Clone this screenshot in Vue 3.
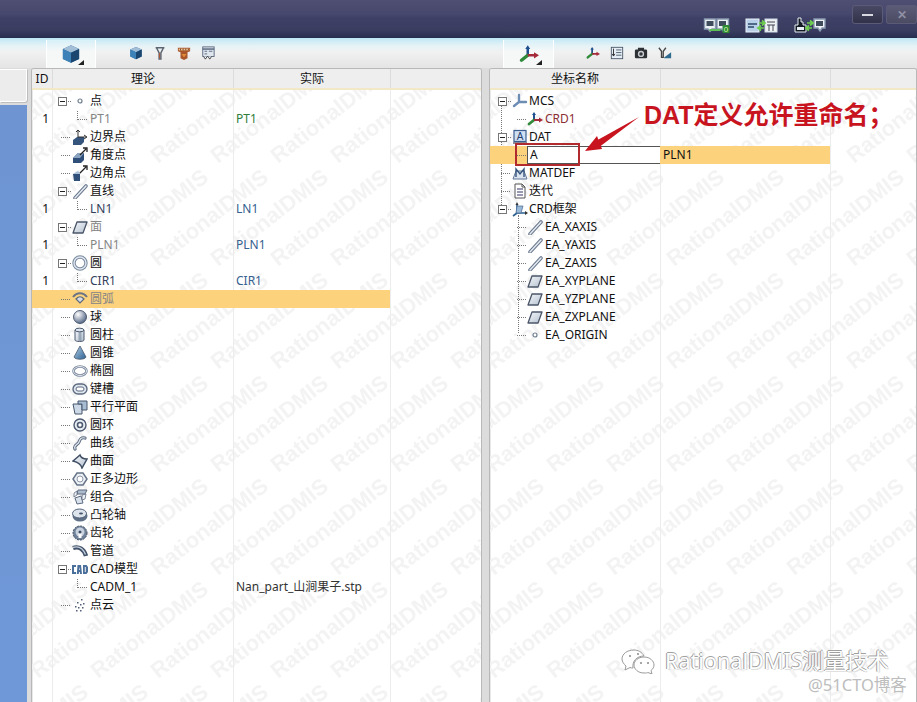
<template>
  <div class="app">
    <svg class="defs" width="0" height="0">
      <defs>
        <linearGradient id="gBlue" x1="0" y1="0" x2="1" y2="1"><stop offset="0" stop-color="#b5d3ea"/><stop offset="1" stop-color="#2c5f8f"/></linearGradient>
        <linearGradient id="gGrey" x1="0" y1="0" x2="1" y2="1"><stop offset="0" stop-color="#f6f8fb"/><stop offset="1" stop-color="#b3c0cf"/></linearGradient>
        <radialGradient id="gBall" cx="0.35" cy="0.3" r="0.8"><stop offset="0" stop-color="#ffffff"/><stop offset="1" stop-color="#44597a"/></radialGradient>
      </defs>
    </svg>

    <header class="titlebar">
      <svg class="tb-icon" width="27" height="16" viewBox="0 0 26 16" v-html="icons.link1"></svg>
      <svg class="tb-icon wide" width="33" height="16" viewBox="0 0 33 16" v-html="icons.link2"></svg>
      <svg class="tb-icon wide" width="33" height="16" viewBox="0 0 33 16" v-html="icons.link3"></svg>
      <div class="winbtn min"><span></span></div>
      <div class="winbtn close">✕</div>
    </header>

    <div class="workspace">
      <aside class="sliver">
        <div class="sliver-head"></div>
        <div class="sliver-blue"></div>
      </aside>

      <section class="pane left-pane">
        <div class="strip">
          <div class="tab">
            <svg width="20" height="20" viewBox="0 0 16 16" v-html="icons.cube"></svg>
            <i class="tab-arrow"></i>
          </div>
          <div class="tools">
            <svg v-for="t in leftTools" :key="t" width="14" height="14" viewBox="0 0 16 16" v-html="icons[t]"></svg>
          </div>
        </div>
        <div class="table">
          <svg class="marks" width="100%" height="100%">
            <defs>
              <pattern id="wmLeft" patternUnits="userSpaceOnUse" width="60" height="103" x="6" y="-8" v-html="markTile"></pattern>
            </defs>
            <rect width="100%" height="100%" fill="url(#wmLeft)"/>
          </svg>
          <div class="thead lcols">
            <div class="th id">ID</div>
            <div class="th">理论</div>
            <div class="th">实际</div>
            <div class="th"></div>
          </div>
          <div class="tbody">
            <div class="cols-bg lcols"><i></i><i></i><i></i><i></i></div>
            <div v-for="(r, i) in leftRows" :key="i" class="row lcols" :class="{ picked: r.picked }">
              <div class="cell-id">{{ r.id }}</div>
              <div class="node">
                <template v-if="r.child">
                  <i class="elbow"></i>
                </template>
                <template v-else>
                  <div class="lead">
                    <i v-if="r.open" class="toggle"></i>
                    <i class="dots" :class="{ short: r.open }"></i>
                  </div>
                  <svg class="ico" width="16" height="16" viewBox="0 0 16 16" v-html="icons[r.icon]"></svg>
                </template>
                <span class="label" :style="{ color: r.color }">{{ r.name }}</span>
              </div>
              <div class="actual" :style="{ color: r.actualColor }">{{ r.actual }}</div>
              <div></div>
            </div>
          </div>
        </div>
      </section>

      <section class="pane right-pane">
        <div class="strip">
          <div class="tab">
            <svg width="22" height="20" viewBox="0 0 16 16" v-html="icons.crd"></svg>
            <i class="tab-arrow"></i>
          </div>
          <div class="tools">
            <svg v-for="t in rightTools" :key="t" width="14" height="14" viewBox="0 0 16 16" v-html="icons[t]"></svg>
          </div>
        </div>
        <div class="table">
          <svg class="marks" width="100%" height="100%">
            <defs>
              <pattern id="wmRight" patternUnits="userSpaceOnUse" width="60" height="103" x="4" y="-8" v-html="markTile"></pattern>
            </defs>
            <rect width="100%" height="100%" fill="url(#wmRight)"/>
          </svg>
          <div class="thead rcols">
            <div class="th">坐标名称</div>
            <div class="th"></div>
            <div class="th"></div>
          </div>
          <div class="tbody">
            <div class="cols-bg rcols"><i></i><i></i><i></i></div>
            <i class="rail rail-a"></i>
            <i class="rail rail-b"></i>
            <div v-for="(r, i) in rightRows" :key="i" class="row rcols" :class="{ picked: r.picked }">
              <div class="node rnode" :class="{ deep: r.deep }">
                <template v-if="r.deep">
                  <i class="rdots"></i>
                  <div v-if="r.edit" class="rename">A</div>
                  <svg v-else class="ico" width="16" height="16" viewBox="0 0 16 16" v-html="icons[r.icon]"></svg>
                </template>
                <template v-else>
                  <div class="rlead">
                    <i v-if="r.open" class="toggle"></i>
                    <i class="dots" :class="{ short: r.open }"></i>
                  </div>
                  <svg class="ico" width="16" height="16" viewBox="0 0 16 16" v-html="icons[r.icon]"></svg>
                </template>
                <span v-if="!r.edit" class="label" :style="{ color: r.color }">{{ r.name }}</span>
              </div>
              <div class="actual rvalue">{{ r.actual }}</div>
              <div></div>
            </div>
          </div>
        </div>
      </section>
    </div>

    <div class="redbox"></div>
    <svg class="arrow" width="70" height="50" viewBox="0 0 70 50">
      <path d="M57 4 L12 29 L16 35 Z" fill="#c8141e"/>
      <path d="M3 38 L15 23 L20 36 Z" fill="#c8141e"/>
    </svg>
    <div class="callout">DAT定义允许重命名；</div>

    <div class="wechat">
      <svg width="34" height="26" viewBox="0 0 34 26" fill="#fff" stroke="#9a9a9a" stroke-width="1">
        <path d="M13 2 C6 2 1 6 1 11 C1 14 3 16 5 18 L4 22 L9 19.5 C10 20 11 20 12 20 C11 13 16 8 23 8 C21 4 17 2 13 2 Z"/>
        <path d="M23 9 C17 9 13 13 13 17 C13 21 17 25 23 25 C25 25 26 25 27 24.500 L31 26 L30 22.500 C32 21 33 19 33 17 C33 13 29 9 23 9 Z"/>
        <circle cx="9" cy="8" r="1" fill="#888" stroke="none"/><circle cx="17" cy="6" r="1" fill="#888" stroke="none"/>
        <circle cx="20" cy="15" r="1" fill="#888" stroke="none"/><circle cx="27" cy="15" r="1" fill="#888" stroke="none"/>
      </svg>
      <span class="wechat-name">RationalDMIS测量技术</span>
    </div>
    <div class="cto">@51CTO博客</div>
  </div>
</template>

<script setup>
const icons = {
  point: '<circle cx="8" cy="8" r="2" fill="#fff" stroke="#6f7f8f" stroke-width="1.200"/>',
  bound: '<path d="M1 11l4-3h7v5l-3 3H1z" fill="#35557c"/><path d="M6 8V1M4 3l2-2 2 2M6 8h8M12 6l3 2-3 2" fill="none" stroke="#333" stroke-width="1"/>',
  angle: '<path d="M1 11l5-5h6v7l-3 3H1z" fill="#2f4f78"/><path d="M1 11l5-5h6L8 11z" fill="#8aa3c0"/><path d="M8 8l6-6M11 1h4v4" fill="none" stroke="#222" stroke-width="1.300"/>',
  corner: '<path d="M1 9l7 0 0 7H2z" fill="#2f4f78"/><path d="M1 9l5-3 3 3z" fill="#a9bdd4"/><path d="M8 8l6-6M11 1h4v4" fill="none" stroke="#222" stroke-width="1.300"/>',
  line: '<path d="M3 15L14 3" stroke="#6d7b90" stroke-width="3.600" stroke-linecap="round"/><path d="M3 15L14 3" stroke="#e6ebf2" stroke-width="1.400" stroke-linecap="round"/>',
  plane: '<path d="M5 3h10l-4 11H1z" fill="url(#gGrey)" stroke="#4a5568" stroke-width="1.300" stroke-linejoin="round"/>',
  circle: '<circle cx="8" cy="8" r="6" fill="none" stroke="#7a8aa0" stroke-width="3.400"/><circle cx="8" cy="8" r="6" fill="none" stroke="#dfe6ee" stroke-width="1.400"/>',
  arc: '<path d="M1 6C5 1 11 1 15 6" fill="none" stroke="#6a7486" stroke-width="2"/><path d="M4 8C7 5 9 5 12 8L8 12z" fill="#d4dbe4" stroke="#5d6879" stroke-width="1.200"/>',
  sphere: '<circle cx="8" cy="8" r="6.500" fill="url(#gBall)" stroke="#34435c" stroke-width=".8"/>',
  cylinder: '<path d="M3 3v10c0 2 9 2 9 0V3z" fill="url(#gGrey)" stroke="#4d5a70"/><path d="M8 4v10" stroke="#6d7f95" stroke-width="3" opacity=".55"/><ellipse cx="7.500" cy="3" rx="4.500" ry="1.800" fill="#dde5ee" stroke="#4d5a70"/>',
  cone: '<path d="M8 1L2 12c1 3 11 3 12 0z" fill="url(#gBlue)" stroke="#4d5a70" stroke-width=".8"/>',
  ellipse: '<ellipse cx="8" cy="8" rx="6.500" ry="4.500" fill="none" stroke="#78869a" stroke-width="2.600"/><ellipse cx="8" cy="8" rx="6.500" ry="4.500" fill="none" stroke="#e4e9f0" stroke-width="1"/>',
  slot: '<rect x="1" y="3" width="14" height="10" rx="5" fill="#dfe6ee" stroke="#5d6b80" stroke-width="1.400"/><rect x="4" y="6" width="8" height="4" rx="2" fill="#fff" stroke="#5d6b80"/>',
  parallel: '<path d="M1 5h9v10H3z" fill="#cdd9e6" stroke="#46566c"/><path d="M6 2h9v9h-5V5H6z" fill="#a9bdd2" stroke="#46566c"/>',
  torus: '<circle cx="8" cy="8" r="6" fill="#e8edf3" stroke="#4d5a70" stroke-width="1.400"/><circle cx="8" cy="8" r="2.500" fill="#fff" stroke="#4d5a70" stroke-width="1.600"/>',
  curve: '<path d="M3 14c-2-4 3-4 4-7s2-5 6-4" fill="none" stroke="#5d6b80" stroke-width="3.200" stroke-linecap="round"/><path d="M3 14c-2-4 3-4 4-7s2-5 6-4" fill="none" stroke="#dfe6ee" stroke-width="1.200" stroke-linecap="round"/>',
  surface: '<path d="M1 8l7-6c1 3 4 4 7 4l-5 9C9 11 5 9 1 8z" fill="url(#gGrey)" stroke="#3f4d63" stroke-width="1.500"/>',
  polygon: '<path d="M5 2h6l4 6-4 6H5L1 8z" fill="#eef2f6" stroke="#667488" stroke-width="1.500"/><circle cx="8" cy="8" r="3" fill="#fff" stroke="#8a97a8"/>',
  group: '<path d="M3 9l6-2 2 7-6 1z" fill="#d9e1ea" stroke="#5d6b80"/><path d="M6 1h9l-2 4H5z" fill="#aebccd" stroke="#5d6b80"/><path d="M2 4l3-2v4L2 8zM10 6l4-1-1 5-3 1z" fill="#eef2f6" stroke="#5d6b80" stroke-width=".8"/>',
  cam: '<ellipse cx="8" cy="9" rx="7.500" ry="5.500" fill="#5f7087"/><ellipse cx="7.500" cy="6.500" rx="7" ry="4.500" fill="#dde4ec" stroke="#53627a"/><ellipse cx="9" cy="6.500" rx="2" ry="1" fill="#47566d"/>',
  gear: '<circle cx="8" cy="8" r="7" fill="#6f8198" stroke="#3f4d63" stroke-dasharray="2 1"/><circle cx="8" cy="7" r="4.500" fill="#c7d2de"/><rect x="6.500" y="8" width="3" height="5" fill="#fff"/><circle cx="8" cy="7" r="1.500" fill="#3f4d63"/>',
  pipe: '<path d="M1 5c6-2 11 1 13 8" fill="none" stroke="#42526a" stroke-width="4.400"/><path d="M1 4.500c6-2 10 1 12.500 7" fill="none" stroke="#c5d0dc" stroke-width="1.400"/>',
  cad: '<path d="M0 4h4v2H2v5h2v2H0zM5.500 4h3.500l1 9H8l-.2-2H7l-.2 2H4.800zM11 4h3.500l1.500 2v5l-1.500 2H11z" fill="#4a6f9a"/><path d="M7.400 6l-.3 3h.8zM12.800 6v5h.9V6z" fill="#fff"/>',
  cloud: '<g fill="#50607a"><rect x="9" y="2" width="1.500" height="1.500"/><rect x="5" y="5" width="1.500" height="1.500"/><rect x="11" y="6" width="1.500" height="1.500"/><rect x="8" y="7" width="1.500" height="1.500"/><rect x="3" y="9" width="1.500" height="1.500"/><rect x="6" y="10" width="1.500" height="1.500"/><rect x="10" y="10" width="1.500" height="1.500"/><rect x="8" y="13" width="1.500" height="1.500"/><rect x="4" y="13" width="1.500" height="1.500"/></g>',
  mcs: '<path d="M7 2v7M7 9l-5 4M7 9h7" stroke="#6d8db5" stroke-width="2.400" fill="none" stroke-linecap="round"/>',
  crd: '<path d="M7 3v6" stroke="#1f4f8f" stroke-width="2"/><path d="M7 1l-2 3h4z" fill="#1f4f8f"/><path d="M7 9L2 13" stroke="#2f8a3a" stroke-width="2.800" stroke-linecap="round"/><path d="M7 9h6" stroke="#a52a3a" stroke-width="2"/><path d="M12 6.500l4 2.500-4 2.500z" fill="#a52a3a"/>',
  dat: '<rect x="2" y="1.500" width="12" height="11" fill="#cfe0f2" stroke="#3d5f8f" stroke-width="1.200"/><text x="8" y="11" text-anchor="middle" font-size="10" font-family="Liberation Sans, sans-serif" fill="#1f3f70">A</text><path d="M1 14h14" stroke="#667" stroke-width="1.400"/>',
  matdef: '<path d="M1 14l3-8h8l3 8z" fill="#dbe5f0" stroke="#5f7799"/><path d="M4 12V4l4 5 4-5v8" fill="none" stroke="#35557c" stroke-width="1.400"/>',
  iter: '<path d="M3 1h7l3 3v11H3z" fill="#fff" stroke="#555"/><path d="M5 6h6M5 9h6M5 12h6" stroke="#336" stroke-width="1"/><path d="M10 1v3h3" fill="none" stroke="#555"/>',
  frame: '<path d="M5 4v8M5 12L1 15M5 12h9" stroke="#2c5f8f" stroke-width="1.600" fill="none"/><path d="M5 5h6l-2 7H4z" fill="#9ab8d8" stroke="#45678f" stroke-width=".7"/><path d="M13 10l3 2-3 2z" fill="#333"/><path d="M5 1L3.500 4h3z" fill="#333"/>',
  cube: '<path d="M8 1l6.500 3v8L8 15l-6.500-3V4z" fill="#2e6697"/><path d="M8 1l6.500 3L8 7 1.500 4z" fill="#a3bfd8"/><path d="M8 7v8l6.500-3V4z" fill="#1a466f"/><path d="M1.500 4L8 7v8l-6.500-3z" fill="#3c82b8"/>',
  funnel: '<path d="M3 2h10M4 2l3 6v7h2V8l3-6" fill="none" stroke="#5c6470" stroke-width="1.700"/><path d="M7.500 8v6" stroke="#b9502a"/>',
  brown: '<path d="M1 2h14v4l-3 1v7l-4 2-4-2V7L1 6z" fill="#a8562a"/><path d="M2 3h12v2H2z" fill="#e8c89a"/><path d="M4 3v2M7 3v2M10 3v2M13 3v2" stroke="#7a3a1a"/><path d="M5 9h6l-3 4z" fill="#e08a3a"/>',
  report: '<rect x="2" y="1" width="13" height="11" fill="#dfe6ee" stroke="#53627a"/><path d="M2 3.500h13" stroke="#53627a" stroke-width="1.600"/><path d="M4 6h3M9 6h4M4 9h3" stroke="#53627a"/><path d="M3 12l2 3 2-3M8 12l2 3 2-3" fill="#fff" stroke="#333"/>',
  list: '<rect x="1.500" y="1.500" width="13" height="13" fill="#e6edf4" stroke="#456"/><path d="M7 4.500h6M7 7.500h6M7 10.500h6" stroke="#456"/><path d="M4 3v8M2.500 9L4 11.500 5.500 9" fill="none" stroke="#222"/>',
  camera: '<rect x="1" y="4" width="14" height="10" rx="1.500" fill="#2d3034"/><rect x="4.500" y="2" width="7" height="3" fill="#2d3034"/><circle cx="8" cy="9" r="3.600" fill="#c8ccd0"/><circle cx="8" cy="9" r="2" fill="#34383d"/>',
  probeY: '<path d="M1 2l3 4v7h2V6l3-4" fill="none" stroke="#444" stroke-width="1.500"/><path d="M7 13l8-6v7H7z" fill="#2e6b8f"/>',
  link1: '<path d="M1 2h11v10H8.500l-2 2.500-2-2.500H1z" fill="#eef2f6" stroke="#8a9bb0" stroke-width="1.400"/><path d="M13.500 2H25v10h-3l-2 2.500-2-2.500h-4.500z" fill="#eef2f6" stroke="#8a9bb0" stroke-width="1.400"/><rect x="3" y="4" width="7" height="5" fill="#3f4c5c"/><rect x="15.500" y="4" width="7" height="5" fill="#3f4c5c"/><path d="M6 13h11" stroke="#5cbf55" stroke-width="2"/><rect x="19" y="8" width="7" height="8" rx="1" fill="#2e8a35"/><text x="22.500" y="15" text-anchor="middle" font-size="8" fill="#d8f8b0" font-family="Liberation Sans, sans-serif">0</text>',
  link2: '<rect x="1" y="2" width="13" height="13" fill="#b8d0e8" stroke="#eaf2fa"/><path d="M3 7h9M3 10h6" stroke="#2d4868" stroke-width="1.600"/><rect x="20" y="2" width="12" height="13" fill="#eef2f3" stroke="#d0dce8"/><path d="M22 5h8M24 8v6M28 8v6M22 8h8" stroke="#445"/><path d="M14 6h6M17 3.500L20 6l-3 2.500M19 11h-6M16 8.500L13 11l3 2.500" stroke="#6fd050" stroke-width="1.700" fill="none"/>',
  link3: '<path d="M2 15V8h3V1h3v4h2v3h3v7z" fill="#141a24" stroke="#e6ecf2"/><rect x="4" y="10" width="7" height="3" fill="#e6edf4"/><path d="M21 2h11v9h-3l-2 3-2-3h-4z" fill="#eef2f6" stroke="#8a9bb0" stroke-width="1.400"/><rect x="23" y="4" width="7" height="5" fill="#3f4c5c"/><path d="M14 6h6M17 3.500L20 6l-3 2.500M19 11h-6M16 8.500L13 11l3 2.500" stroke="#6fd050" stroke-width="1.700" fill="none"/>'
}

const leftTools = ['cube', 'funnel', 'brown', 'report']
const rightTools = ['crd', 'list', 'camera', 'probeY']

const GREY = '#858585'
const BLUE = '#35608f'

const leftRows = [
  { name: '点', icon: 'point', open: true },
  { id: 1, name: 'PT1', child: true, color: GREY, actual: 'PT1', actualColor: '#2f7d3c' },
  { name: '边界点', icon: 'bound' },
  { name: '角度点', icon: 'angle' },
  { name: '边角点', icon: 'corner' },
  { name: '直线', icon: 'line', open: true },
  { id: 1, name: 'LN1', child: true, color: '#33415c', actual: 'LN1', actualColor: BLUE },
  { name: '面', icon: 'plane', open: true, color: GREY },
  { id: 1, name: 'PLN1', child: true, color: GREY, actual: 'PLN1', actualColor: BLUE },
  { name: '圆', icon: 'circle', open: true },
  { id: 1, name: 'CIR1', child: true, color: '#33415c', actual: 'CIR1', actualColor: BLUE },
  { name: '圆弧', icon: 'arc', picked: true, color: GREY },
  { name: '球', icon: 'sphere' },
  { name: '圆柱', icon: 'cylinder' },
  { name: '圆锥', icon: 'cone' },
  { name: '椭圆', icon: 'ellipse' },
  { name: '键槽', icon: 'slot' },
  { name: '平行平面', icon: 'parallel' },
  { name: '圆环', icon: 'torus' },
  { name: '曲线', icon: 'curve' },
  { name: '曲面', icon: 'surface' },
  { name: '正多边形', icon: 'polygon' },
  { name: '组合', icon: 'group' },
  { name: '凸轮轴', icon: 'cam' },
  { name: '齿轮', icon: 'gear' },
  { name: '管道', icon: 'pipe' },
  { name: 'CAD模型', icon: 'cad', open: true },
  { name: 'CADM_1', child: true, actual: 'Nan_part_山涧果子.stp', actualColor: '#333' },
  { name: '点云', icon: 'cloud' }
]

const rightRows = [
  { name: 'MCS', icon: 'mcs', open: true },
  { name: 'CRD1', icon: 'crd', deep: true, color: '#8c2f35' },
  { name: 'DAT', icon: 'dat', open: true },
  { deep: true, edit: true, picked: true, actual: 'PLN1' },
  { name: 'MATDEF', icon: 'matdef' },
  { name: '迭代', icon: 'iter' },
  { name: 'CRD框架', icon: 'frame', open: true },
  { name: 'EA_XAXIS', icon: 'line', deep: true },
  { name: 'EA_YAXIS', icon: 'line', deep: true },
  { name: 'EA_ZAXIS', icon: 'line', deep: true },
  { name: 'EA_XYPLANE', icon: 'plane', deep: true },
  { name: 'EA_YZPLANE', icon: 'plane', deep: true },
  { name: 'EA_ZXPLANE', icon: 'plane', deep: true },
  { name: 'EA_ORIGIN', icon: 'point', deep: true }
]

// one tile of the faint slanted watermark, the word runs past the tile so it is drawn at each offset
const markTile = [60, 0, -60, -120, -180].flatMap((x) =>
  [0, 103, 206].map((y) =>
    `<text transform="translate(${x} ${y}) rotate(-38)" font-family="Liberation Sans, sans-serif" font-size="22" font-weight="700" fill="#f3f3f3">RationalDMIS</text>`
  )
).join('')
</script>

<style>
html, body { margin: 0; background: #e9e9e9; overflow: hidden; }
</style>

<style scoped>
.app {
  position: relative;
  width: 917px;
  height: 702px;
  overflow: hidden;
  display: flex;
  flex-direction: column;
  font-family: "Noto Sans", "Noto Sans CJK SC", sans-serif;
  font-size: 12px;
  color: #111;
  background: #e4e4e4;
}
.defs { position: absolute; }

.titlebar {
  height: 38px;
  flex: none;
  display: flex;
  justify-content: flex-end;
  align-items: flex-start;
  background: linear-gradient(#4f4f74 0, #47486d 14px, #3e4065 18px, #3a3c60 30px, #2b3152 37px, #1f2c46 38px);
}
.tb-icon { margin: 17px 15px 0 0; }
.tb-icon.wide:nth-of-type(3) { margin-right: 26px; }
.winbtn {
  width: 31px;
  height: 19px;
  margin-top: 5px;
  border-radius: 3px;
  background: linear-gradient(#4a4a66, #303048);
  box-shadow: inset 0 0 0 1px #5b5b78;
  display: flex;
  align-items: center;
  justify-content: center;
}
.winbtn.min span { width: 11px; height: 2px; background: #d8d8e0; }
.winbtn.close {
  margin-left: 3px;
  color: #8f8fa3;
  font-size: 12px;
  font-weight: 700;
  background: linear-gradient(#5c5c78, #4a4a62);
}

.workspace {
  flex: 1;
  display: flex;
  background: linear-gradient(#bfe6f5 0, #e6f3f6 8px, #f1f1f1 14px, #e5e5e5 29px);
  background-repeat: no-repeat;
  background-size: 100% 30px;
  background-color: #dcdcdc;
}

.sliver { width: 27px; padding-top: 31px; margin-right: 4px; flex: none; display: flex; flex-direction: column; }
.sliver-head { height: 31px; background: #ececec; border: 1px solid #fff; border-left: 0; border-radius: 0 0 3px 0; box-shadow: 1px 1px 0 #bdbdbd; }
.sliver-blue { flex: 1; margin-top: 3px; background: linear-gradient(#6e95d2, #6f98d8); }

.pane { display: flex; flex-direction: column; flex: none; }
.left-pane { width: 451px; margin-right: 7px; }
.right-pane { width: 428px; }

.strip { height: 30px; flex: none; display: flex; align-items: center; }
.tab {
  position: relative;
  width: 50px;
  height: 28px;
  margin: 2px 0 0 15px;
  display: flex;
  align-items: center;
  justify-content: center;
  background: linear-gradient(#d7f0f8, #f6f8f8 40%);
  border-left: 1px solid #fff;
  border-right: 1px solid #fff;
  box-sizing: border-box;
}
.right-pane .tab { margin-left: 14px; width: 51px; }
.tab-arrow {
  position: absolute;
  right: 11px;
  bottom: 3px;
  border-left: 6px solid transparent;
  border-bottom: 5px solid #222;
}
.tools { display: flex; gap: 10px; margin-left: 33px; }
.right-pane .tools { margin-left: 32px; }

.table {
  position: relative;
  flex: 1;
  overflow: hidden;
  background: #fff;
  border: 1px solid #b8b8b8;
  border-bottom: 0;
  border-radius: 3px 3px 0 0;
  box-shadow: inset 1px 0 0 #e8e8e8;
}
.marks { position: absolute; top: 0; left: 0; pointer-events: none; filter: blur(0.7px); }

.lcols { display: grid; grid-template-columns: 20px 181px 157px 91px; }
.rcols { display: grid; grid-template-columns: 170px 170px 87px; }

.thead {
  position: relative;
  height: 19px;
  background: #eeeeee;
  border-bottom: 2px solid #f3e8c6;
}
.th {
  display: flex;
  align-items: center;
  justify-content: center;
  border-left: 1px solid #dcdcdc;
  line-height: 19px;
}
.th:first-child { border-left: 0; }

.tbody { position: relative; padding-top: 2px; }
.cols-bg { position: absolute; top: 0; left: 0; height: 640px; }
.cols-bg i { border-left: 1px solid #ececec; }
.cols-bg i:first-child { border-left: 0; }

.row {
  position: relative;
  height: 18px;
  line-height: 18px;
  white-space: nowrap;
}
.row.picked > * { background: #fdd27d; }
.row.picked > *:last-child { background: transparent; }

.cell-id { text-align: right; padding-right: 3px; }
.node { display: flex; align-items: center; padding-left: 6px; }
.lead { width: 14px; height: 18px; display: flex; align-items: center; flex: none; position: relative; }
.rlead { width: 14px; height: 18px; display: flex; align-items: center; flex: none; margin-left: 2px; }
.toggle {
  flex: none;
  position: relative;
  width: 7px;
  height: 7px;
  border: 1px solid #777;
  background: #fff;
}
.toggle::after { content: ""; position: absolute; left: 1px; right: 1px; top: 3px; height: 1px; background: #222; }
.dots { flex: 1; margin: 0 2px 0 3px; border-top: 1px dotted #777; }
.dots.short { margin: 0 1px; }
.ico { flex: none; }
.label { margin-left: 2px; }
.rnode .label { margin-left: 1px; }
.rnode.deep .label { margin-left: 2px; }
.elbow {
  flex: none;
  width: 9px;
  height: 8px;
  margin: -8px 1px 0 19px;
  border-left: 1px dotted #777;
  border-bottom: 1px dotted #777;
}
.actual { padding-left: 3px; }

.rnode { padding-left: 6px; }
.rnode.deep { padding-left: 27px; }
.rdots { flex: none; width: 9px; border-top: 1px dotted #777; margin-right: 1px; }
.rail { position: absolute; width: 0; border-left: 1px dotted #777; }
.rail-a { left: 11px; top: 15px; height: 100px; }
.rail-b { left: 28px; top: 125px; height: 118px; }
.rename {
  box-sizing: border-box;
  width: 134px;
  height: 18px;
  line-height: 16px;
  padding-left: 2px;
  background: #fff;
  border: 1px solid #555;
  margin-right: -100px;
  flex: none;
}
.rvalue { padding-left: 3px; }

.redbox {
  position: absolute;
  left: 515px;
  top: 143px;
  width: 61px;
  height: 19px;
  border: 2px solid #b02a2e;
}
.arrow { position: absolute; left: 582px; top: 113px; }
.callout {
  position: absolute;
  left: 644px;
  top: 99px;
  font-family: "Liberation Sans", "Noto Sans CJK SC", sans-serif;
  font-size: 25px;
  font-weight: 700;
  line-height: 32px;
  color: #c8141e;
  white-space: nowrap;
}
.wechat {
  position: absolute;
  left: 621px;
  top: 648px;
  display: flex;
  align-items: center;
  gap: 10px;
}
.wechat-name {
  font-size: 21.6px;
  line-height: 24px;
  color: #fff;
  text-shadow: -1px 0 #999, 0 -1px #a0a0a0, 1px 1px #e0e0e0;
  white-space: nowrap;
}
.cto {
  position: absolute;
  left: 808px;
  top: 676px;
  font-size: 16.5px;
  line-height: 18px;
  color: #bdbdbd;
  white-space: nowrap;
}
</style>
